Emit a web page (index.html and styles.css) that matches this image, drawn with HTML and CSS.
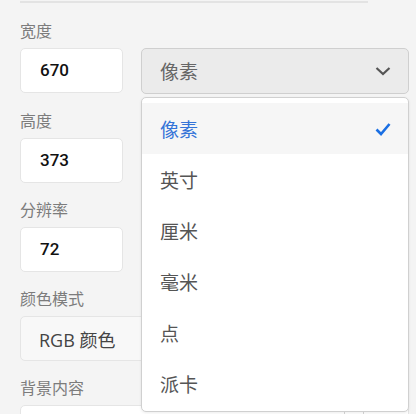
FILE: index.html
```html
<!DOCTYPE html>
<html lang="zh-CN">
<head>
<meta charset="utf-8" />
<title>新建文档</title>
<link rel="stylesheet" href="styles.css">
</head>
<body>
<div class="panel">
	<div class="divider"></div>

	<div class="field first">
		<p class="label">宽度</p>
		<div class="row">
			<div class="input">670</div>
			<div class="select-wrap">
				<div class="select open">
					<span>像素</span>
					<svg class="chevron" width="16" height="10" viewBox="0 0 16 10"><polyline points="1.5,2 8,8 14.5,2" fill="none" stroke="#555" stroke-width="2.2" /></svg>
				</div>
				<ul class="menu">
					<li class="on">像素<svg class="check" width="16" height="14" viewBox="0 0 16 14"><polyline points="1.5,7.5 6,12 14.5,2" fill="none" stroke="#1a6fe3" stroke-width="2.6" /></svg></li>
					<li>英寸</li>
					<li>厘米</li>
					<li>毫米</li>
					<li>点</li>
					<li>派卡</li>
				</ul>
			</div>
		</div>
	</div>

	<div class="field">
		<p class="label">高度</p>
		<div class="input">373</div>
	</div>

	<div class="field">
		<p class="label">分辨率</p>
		<div class="input">72</div>
	</div>

	<div class="field">
		<p class="label">颜色模式</p>
		<div class="select light">RGB 颜色</div>
	</div>

	<div class="field">
		<p class="label">背景内容</p>
		<div class="select blank"><i class="sep"></i></div>
	</div>
</div>
</body>
</html>
```

FILE: styles.css
```css
*{margin:0; padding:0}
body{background:#f4f4f4; font-family:"Open Sans","Noto Sans CJK SC",sans-serif; overflow:hidden;}

.panel{ padding:0 7px 0 20px;}
.divider{ width:348px; height:2px; margin-top:1px; background:#e3e3e3;}

.field{ margin-top:17px;}
.field.first{ margin-top:18px;}
.label{ font-size:16px; line-height:20px; color:#7c7c7c; margin-bottom:7px;}

.row{ display:flex; gap:18px;}

.input{ width:103px; height:45px; box-sizing:border-box; padding-left:19px; background:#fff; border:1px solid #e5e5e5; border-radius:5px; font-family:Roboto,sans-serif; font-size:17px; font-weight:500; color:#111; line-height:43px;}

.select-wrap{ flex:1; position:relative;}
.select{ height:46px; box-sizing:border-box; border-radius:5px; display:flex; align-items:center; padding-left:18px; font-size:19px; color:#666;}
.select.open{ background:#ebebeb; border:1px solid #cfcfcf; justify-content:space-between; padding-right:17px;}
.select.light{ height:45px; background:#f8f8f8; border:1px solid #e5e5e5; font-size:18px; color:#444;}
.select.blank{ height:45px; background:#fff; border:1px solid #e5e5e5; position:relative;}
.sep{ position:absolute; left:323px; top:6px; width:18px; height:30px; border-left:1px solid #d5d5d5; border-right:1px solid #d5d5d5;}

.menu{ list-style:none; position:absolute; left:0; right:0; top:49px; padding:5px 0 2px; background:#fff; border:1px solid #d0d0d0; border-radius:5px; box-shadow:0 1px 3px rgba(0,0,0,0.08); z-index:2;}
.menu li{ height:51px; display:flex; align-items:center; justify-content:space-between; padding:0 17px 0 18px; font-size:19px; color:#555;}
.menu li.on{ background:#f6f6f6; color:#3574d8;}
```
